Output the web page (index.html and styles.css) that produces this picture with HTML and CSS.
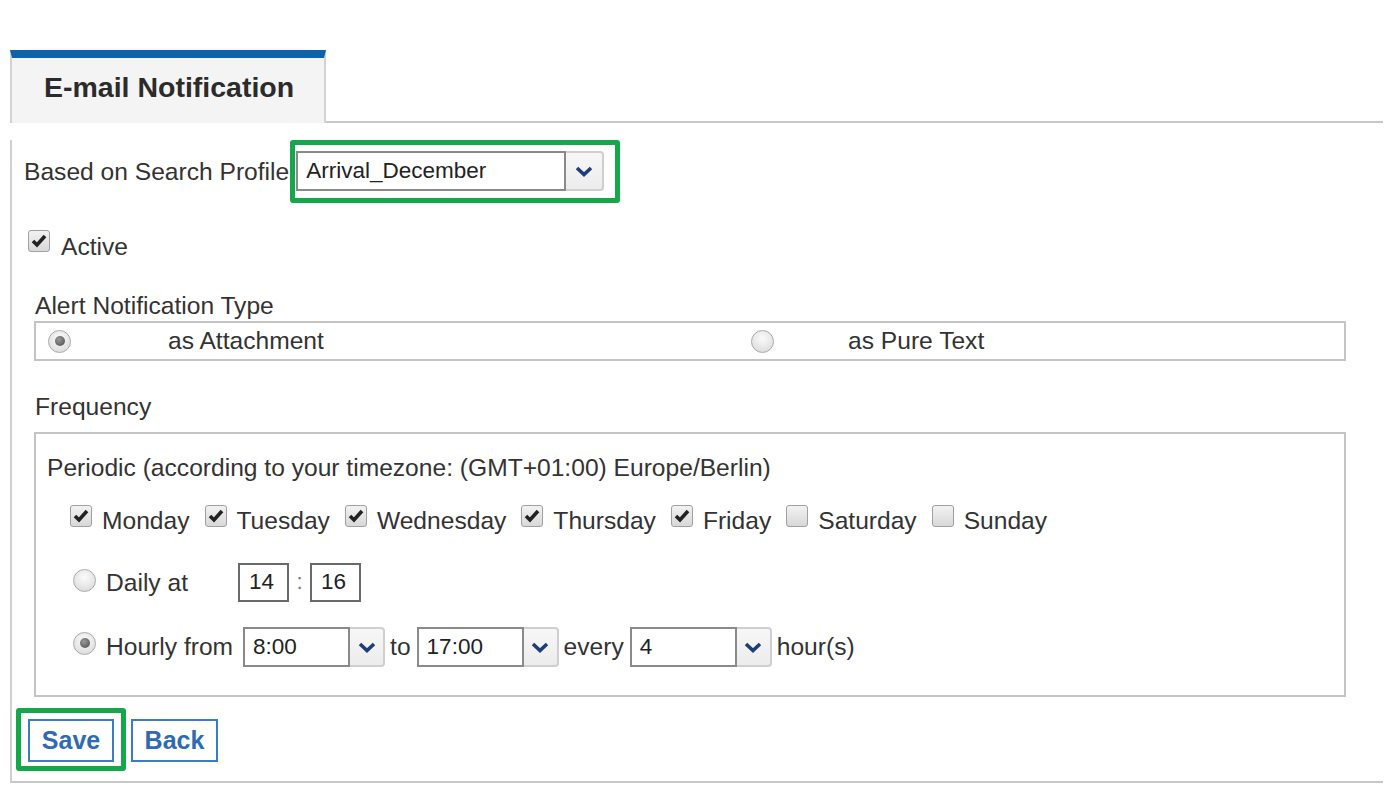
FILE: index.html
```html
<!DOCTYPE html>
<html lang="en">
<head>
  <meta charset="UTF-8">
  <meta name="viewport" content="width=device-width, initial-scale=1.0">
  <title>E-mail Notification</title>
  <link rel="stylesheet" href="styles.css">
</head>
<body>
  <div class="page">
    <div class="tabs">
      <div class="tab">E-mail Notification</div>
      <div class="tab-rest"></div>
    </div>
    <div class="panel">
      <div class="profile-row">
        <span class="profile-label">Based on Search Profile</span>
        <div class="highlight profile-hl">
          <div class="select profile-select">
            <span class="select-value">Arrival_December</span>
            <span class="select-btn"><svg width="18" height="11" viewBox="0 0 18 11"><path d="M2 2 L9 8.5 L16 2" fill="none" stroke="#1f3d78" stroke-width="3.6"/></svg></span>
          </div>
        </div>
      </div>

      <div class="active-row">
        <span class="cb checked"><svg width="16" height="14" viewBox="0 0 16 14"><path d="M2 7 L6 11 L14 2" fill="none" stroke="#222" stroke-width="3.6"/></svg></span>
        <span class="active-text">Active</span>
      </div>

      <div class="section">
        <div class="section-title">Alert Notification Type</div>
        <div class="type-box">
          <div class="type-opt first"><span class="radio checked"></span><span class="type-text">as Attachment</span></div>
          <div class="type-opt second"><span class="radio"></span><span class="type-text">as Pure Text</span></div>
        </div>
      </div>

      <div class="section freq">
        <div class="section-title">Frequency</div>
        <div class="freq-box">
          <div class="periodic">Periodic (according to your timezone: (GMT+01:00) Europe/Berlin)</div>
          <div class="days" id="days"></div>
          <div class="freq-row daily">
            <span class="radio"></span>
            <span class="row-label daily-label">Daily at</span>
            <span class="time-input">14</span>
            <span class="colon">:</span>
            <span class="time-input">16</span>
          </div>
          <div class="freq-row hourly">
            <span class="radio checked"></span>
            <span class="row-label">Hourly from</span>
            <div class="select small-select">
              <span class="select-value">8:00</span>
              <span class="select-btn"><svg width="18" height="11" viewBox="0 0 18 11"><path d="M2 2 L9 8.5 L16 2" fill="none" stroke="#1f3d78" stroke-width="3.6"/></svg></span>
            </div>
            <span class="word">to</span>
            <div class="select small-select">
              <span class="select-value">17:00</span>
              <span class="select-btn"><svg width="18" height="11" viewBox="0 0 18 11"><path d="M2 2 L9 8.5 L16 2" fill="none" stroke="#1f3d78" stroke-width="3.6"/></svg></span>
            </div>
            <span class="word">every</span>
            <div class="select small-select">
              <span class="select-value">4</span>
              <span class="select-btn"><svg width="18" height="11" viewBox="0 0 18 11"><path d="M2 2 L9 8.5 L16 2" fill="none" stroke="#1f3d78" stroke-width="3.6"/></svg></span>
            </div>
            <span class="word">hour(s)</span>
          </div>
        </div>
      </div>

      <div class="actions">
        <div class="highlight save-hl"><button class="btn">Save</button></div>
        <button class="btn">Back</button>
      </div>
    </div>
  </div>
  <script>
    const days = [
      ['Monday', true], ['Tuesday', true], ['Wednesday', true],
      ['Thursday', true], ['Friday', true], ['Saturday', false], ['Sunday', false]
    ];
    const check = '<svg width="16" height="14" viewBox="0 0 16 14"><path d="M2 7 L6 11 L14 2" fill="none" stroke="#222" stroke-width="3.6"/></svg>';

    const wrap = document.getElementById('days');
    days.forEach(([name, on]) => {
      const day = document.createElement('span');
      day.className = 'day';
      day.innerHTML = '<span class="cb' + (on ? ' checked' : '') + '">' + (on ? check : '') + '</span>' +
        '<span class="day-name">' + name + '</span>';
      wrap.appendChild(day);
    });
  </script>
</body>
</html>
```

FILE: styles.css
```css
body {
  margin: 0;
  background-color: #fff;
  font-family: 'Liberation Sans', Arial, sans-serif;
  font-size: 24.6px;
  color: #333;
}
.page {
  padding: 50px 9px 0 10px;
}
.tabs {
  display: flex;
  align-items: flex-end;
}
.tab {
  width: 316px;
  height: 73px;
  padding: 0 0 6px 32px;
  box-sizing: border-box;
  border-top: 8px solid #0d62ab;
  border-left: 2px solid #d4d4d4;
  border-right: 2px solid #d4d4d4;
  background-color: #f4f4f4;
  font-size: 28.5px;
  font-weight: bold;
  color: #2b2b2b;
  display: flex;
  align-items: center;
}
.tab-rest {
  flex: 1;
  border-bottom: 2px solid #c8c8c8;
}
.panel {
  border-left: 2px solid #d0d0d0;
  border-bottom: 2px solid #c8c8c8;
  padding: 0 0 10px 12px;
}
.profile-row {
  display: flex;
  align-items: center;
  margin-top: 17px;
}
.profile-label {
  margin-right: 1px;
  white-space: nowrap;
}
.highlight {
  border: 5px solid #15a84b;
  border-radius: 3px;
}
.profile-hl {
  padding: 6px 11px 7px 1px;
}
.select {
  display: flex;
  height: 40px;
  box-sizing: border-box;
}
.select-value {
  flex: 1;
  border: 2px solid #8a8a8a;
  background: #fff;
  padding-left: 8px;
  font-size: 22.5px;
  color: #222;
  display: flex;
  align-items: center;
}
.select-btn {
  width: 33px;
  border: 2px solid #cfcfcf;
  border-left: none;
  border-radius: 0 4px 4px 0;
  background: linear-gradient(#f7f7f7, #ececec);
  display: flex;
  align-items: center;
  justify-content: center;
}
.profile-select {
  width: 308px;
}
.profile-select .select-btn {
  width: 36px;
}
.active-row {
  display: flex;
  align-items: center;
  height: 30px;
  margin-top: 27px;
  padding-left: 4px;
}
.active-row .cb {
  align-self: flex-start;
}
.active-text {
  margin-left: 11px;
  padding-top: 3px;
}
.cb {
  width: 22px;
  height: 22px;
  box-sizing: border-box;
  border: 1px solid #a0a0a0;
  border-radius: 3px;
  background: linear-gradient(#f2f2f2, #d8d8d8);
  display: inline-flex;
  align-items: center;
  justify-content: center;
  flex-shrink: 0;
}
.radio {
  width: 23px;
  height: 23px;
  box-sizing: border-box;
  border: 1px solid #aaa;
  border-radius: 50%;
  background: radial-gradient(circle at 50% 35%, #fbfbfb, #d6d6d6);
  display: inline-flex;
  align-items: center;
  justify-content: center;
  flex-shrink: 0;
}
.radio.checked::after {
  content: '';
  width: 10px;
  height: 10px;
  border-radius: 50%;
  background: radial-gradient(circle at 40% 35%, #999, #4a4a4a);
}
.section {
  margin-left: 10px;
  margin-top: 31px;
  width: 1312px;
}
.section-title {
  line-height: 30px;
  padding-left: 1px;
}
.type-box {
  height: 40px;
  box-sizing: border-box;
  border: 2px solid #c4c4c4;
  display: flex;
  align-items: center;
  padding-left: 12px;
}
.type-opt {
  display: flex;
  align-items: center;
}
.type-opt.first {
  width: 703px;
}
.type-opt.first .type-text {
  margin-left: 97px;
}
.type-opt.second .type-text {
  margin-left: 74px;
}
.freq .section-title {
  margin-bottom: 10px;
}
.freq-box {
  height: 265px;
  box-sizing: border-box;
  border: 2px solid #c4c4c4;
  padding: 19px 0 0 11px;
}
.periodic {
  line-height: 30px;
}
.days {
  display: flex;
  align-items: center;
  height: 30px;
  margin-top: 21px;
  padding-left: 23px;
}
.day {
  display: flex;
  align-items: center;
  margin-right: 15px;
}
.day .cb {
  margin-top: -6px;
}
.day-name {
  margin-left: 10px;
  padding-top: 4px;
}
.freq-row {
  display: flex;
  align-items: center;
  height: 40px;
  padding-left: 26px;
}
.daily {
  margin-top: 28px;
}
.daily .radio {
  margin-top: -4px;
}
.daily .row-label {
  padding-top: 2px;
}
.hourly {
  margin-top: 25px;
}
.hourly .radio {
  margin-top: -8px;
}
.row-label {
  margin-left: 10px;
  margin-right: 10px;
}
.daily-label {
  width: 122px;
}
.time-input {
  width: 51px;
  height: 39px;
  box-sizing: border-box;
  border: 2px solid #6a6a6a;
  font-size: 22.5px;
  color: #222;
  padding-left: 9px;
  display: flex;
  align-items: center;
}
.colon {
  font-size: 22px;
  width: 21px;
  text-align: center;
  color: #777;
}
.small-select {
  width: 142px;
}
.word {
  margin: 0 6px 0 5px;
}
.actions {
  display: flex;
  align-items: flex-start;
  margin-top: 11px;
  margin-left: -8px;
}
.save-hl {
  padding: 6px 7px 4px 7px;
  margin-right: 5px;
}
.btn {
  width: 86px;
  height: 43px;
  box-sizing: border-box;
  border: 2px solid #3d7cc3;
  background: #fff;
  color: #2e6bb3;
  font-family: 'Liberation Sans', Arial, sans-serif;
  font-size: 25px;
  font-weight: bold;
  padding: 0;
  border-radius: 0;
}
.actions > .btn {
  margin-top: 11px;
  width: 87px;
}
```
